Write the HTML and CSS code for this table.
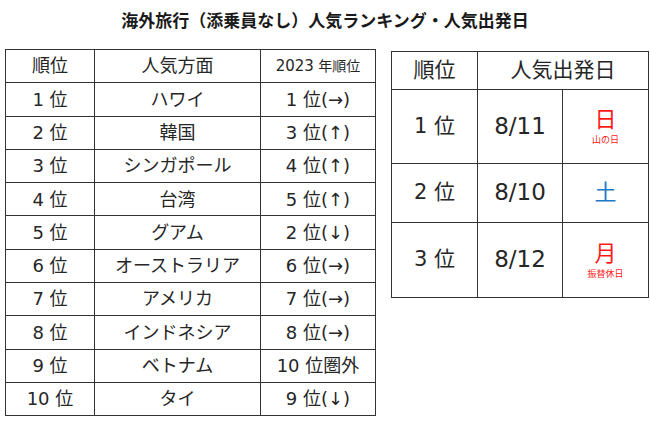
FILE: index.html
```html
<!DOCTYPE html>
<html lang="ja">
<head>
<meta charset="utf-8">
<link rel="stylesheet" href="styles.css">
</head>
<body>
<div class="page">
  <h1 class="title">海外旅行（添乗員なし）人気ランキング・人気出発日</h1>
  <div class="tables">
    <table class="rank">
      <colgroup><col class="c1"><col class="c2"><col class="c3"></colgroup>
      <tr><td>順位</td><td>人気方面</td><td class="prev-head"><span class="yr">2023</span> 年順位</td></tr>
      <tr><td>1 位</td><td>ハワイ</td><td>1 位(→)</td></tr>
      <tr><td>2 位</td><td>韓国</td><td>3 位(↑)</td></tr>
      <tr><td>3 位</td><td>シンガポール</td><td>4 位(↑)</td></tr>
      <tr><td>4 位</td><td>台湾</td><td>5 位(↑)</td></tr>
      <tr><td>5 位</td><td>グアム</td><td>2 位(↓)</td></tr>
      <tr><td>6 位</td><td>オーストラリア</td><td>6 位(→)</td></tr>
      <tr><td>7 位</td><td>アメリカ</td><td>7 位(→)</td></tr>
      <tr><td>8 位</td><td>インドネシア</td><td>8 位(→)</td></tr>
      <tr><td>9 位</td><td>ベトナム</td><td>10 位圏外</td></tr>
      <tr><td>10 位</td><td>タイ</td><td>9 位(↓)</td></tr>
    </table>
    <table class="dates">
      <colgroup><col class="d1"><col class="d2"><col class="d3"></colgroup>
      <tr class="dh"><td>順位</td><td colspan="2">人気出発日</td></tr>
      <tr class="r1"><td>1 位</td><td class="num">8/11</td><td class="red"><span class="day">日</span><span class="note">山の日</span></td></tr>
      <tr class="r2"><td>2 位</td><td class="num">8/10</td><td class="blue"><span class="day">土</span></td></tr>
      <tr class="r3"><td>3 位</td><td class="num">8/12</td><td class="red"><span class="day">月</span><span class="note">振替休日</span></td></tr>
    </table>
  </div>
</div>
</body>
</html>
```

FILE: styles.css
```css
html, body {
  margin: 0;
  padding: 0;
  background: #ffffff;
}
body {
  font-family: "DejaVu Sans", "Noto Sans CJK JP", sans-serif;
  color: #262626;
  width: 650px;
  height: 423px;
  overflow: hidden;
}
.page {
  padding-top: 8px;
}
.title {
  margin: 0;
  font-family: "Noto Sans CJK JP", sans-serif;
  font-size: 17px;
  font-weight: 700;
  line-height: 24px;
  text-align: center;
  color: #1a1a1a;
}
.tables {
  display: flex;
  align-items: flex-start;
  margin-top: 17px;
  padding-left: 5px;
}
table {
  border-collapse: collapse;
  table-layout: fixed;
}
td {
  border: 1px solid #333;
  text-align: center;
  vertical-align: middle;
  padding: 0;
  line-height: 1.2;
}
.rank {
  width: 370px;
  font-size: 18px;
}
.rank .c1 { width: 89px; }
.rank .c2 { width: 166px; }
.rank .c3 { width: 115px; }
.rank td {
  height: 32.3px;
}
.prev-head {
  font-size: 14px;
}
.yr {
  font-size: 15px;
}
.dates {
  width: 257px;
  margin-left: 15px;
  margin-top: 2px;
  font-size: 21px;
}
.dates .num {
  font-size: 23px;
}
.dates .d1 { width: 86px; }
.dates .d2 { width: 85px; }
.dates .d3 { width: 86px; }
.dates .dh td { height: 37px; }
.dates .r1 td { height: 73px; }
.dates .r2 td { height: 58px; }
.dates .r3 td { height: 74px; }
.day {
  display: block;
  font-size: 22px;
  line-height: 26px;
}
.note {
  display: block;
  font-size: 9px;
  line-height: 12px;
  margin-top: 1px;
}
.red { color: #ff1a1a; }
.blue { color: #1f78c8; }
```
